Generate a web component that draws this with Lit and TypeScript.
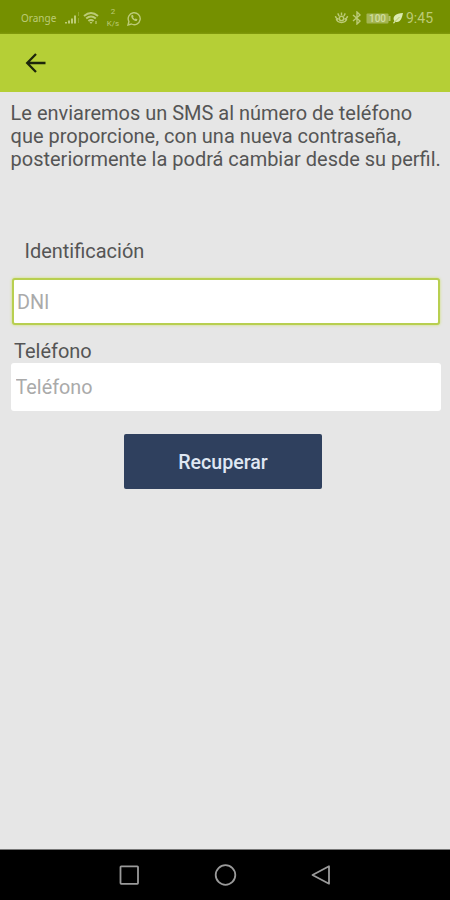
import { LitElement, html, css } from "lit";
import { customElement } from "lit/decorators.js";

@customElement("status-bar")
class StatusBar extends LitElement {
  static styles = css`
    :host { display: flex; height: 34px; background: linear-gradient(#759000 0 32px, #829b0d 34px); color: #bccb76; font: 11px Roboto, sans-serif; box-sizing: border-box; padding: 2px 17px 0 21px; align-items: center; justify-content: space-between; }
    .group { display: flex; align-items: center; }
    .carrier { font: 10px "Noto Sans", sans-serif; width: 44px; white-space: nowrap; }
    .rate { display: flex; flex-direction: column; align-items: center; font-size: 8px; line-height: 12px; width: 16px; margin: 0 6px 0 5px; }
    .time { font-size: 14px; margin-left: 2px; white-space: nowrap; }
    svg { display: block; }
  `;
  render() {
    return html`
      <div class="group">
        <span class="carrier">Orange</span>
        <svg width="18" height="16" viewBox="0 0 18 16" fill="currentColor"><path d="M0 12h2v1.5H0zM3 10.5h2v3H3zM6 8.5h2v5H6zM9 5.5h2v8H9z"/><path d="M13 2h1v4h-1zM13 8h1v5h-1z" opacity=".4"/></svg>
        <svg width="17" height="14" viewBox="0 0 17 14" fill="none" stroke="currentColor" stroke-width="2"><path d="M1 5Q8-1 15 5M3.2 7.5Q8 3.5 12.8 7.5M5.4 10Q8 8 10.6 10"/><path d="M6.5 11h3L8 13z" fill="currentColor" stroke="none"/><path d="M13 10v3" stroke-width="1.2"/></svg>
        <span class="rate"><span>2</span><span>K/s</span></span>
        <svg width="14" height="15" viewBox="0 0 14 15" fill="none" stroke="currentColor" stroke-width="1.4"><path d="M1 14l.9-3.5A6 6 0 1 1 4.4 13z"/><path d="M4.2 4.5c-.2 3 2.3 5.6 5.5 5.5l.8-1.7-1.9-.8-.9.8L6 6.2l.6-.8-.8-1.6z" fill="currentColor" stroke="none"/></svg>
      </div>
      <div class="group">
        <svg width="15" height="14" viewBox="0 0 16 14" fill="none" stroke="currentColor" stroke-width="1.5"><path d="M1.5 5c.5 2 1.5 3 3.5 3m9.5-3c-.5 2-1.5 3-3.5 3M2.5 8c1 5 10 5 11 0M8 1v3M4 2l1.5 3M12 2l-1.5 3"/><circle cx="8" cy="7.5" r="2.3"/></svg>
        <svg width="17" height="14" viewBox="0 0 17 14" fill="none" stroke="currentColor" stroke-width="1.4"><path d="M4 4l7 6-3 3V1l3 3-7 6"/></svg>
        <svg width="26" height="13" viewBox="0 0 26 13"><rect x="0.5" y="1.5" width="22" height="10" rx="1" fill="#a4b552"/><path d="M22.5 4h2v5h-2z" fill="#b2c16a"/><text x="3" y="10" font-size="10" font-weight="500" textLength="17" fill="#d2dea0">100</text></svg>
        <svg width="12" height="12" viewBox="0 0 11 12" fill="#dcebb0"><path d="M10.5 1C3 1-.5 5 1.8 9L.5 11l1 .5L3 9.8C8 11 9.5 6 10.5 1z"/><path d="M2 10l5-5" stroke="#a5b852" stroke-width=".7"/></svg>
        <span class="time">9:45</span>
      </div>`;
  }
}

@customElement("nav-bar")
class NavBar extends LitElement {
  static styles = css`
    :host { display: flex; height: 51px; box-sizing: border-box; border-top: 1px solid #777; background: #000; align-items: center; justify-content: space-between; padding: 0 118px; }
    svg { display: block; }
  `;
  render() {
    return html`
      <svg width="22" height="24" viewBox="0 0 22 24" fill="none" stroke="#9a9a9a" stroke-width="1.8"><rect x="2.5" y="3.3" width="17.5" height="17.5" rx=".7"/></svg>
      <svg width="24" height="24" viewBox="0 0 24 24" fill="none" stroke="#9a9a9a" stroke-width="1.8"><circle cx="12.5" cy="12" r="9.8"/></svg>
      <svg width="22" height="24" viewBox="0 0 22 24" fill="none" stroke="#9a9a9a" stroke-width="1.8" stroke-linejoin="round"><path d="M2.5 12L19 3.3v17.4z"/></svg>`;
  }
}

@customElement("app-root")
class AppRoot extends LitElement {
  static styles = css`
    :host { display: flex; flex-direction: column; height: 900px; background: #e6e6e6; font-family: Roboto, sans-serif; color: #555; overflow: hidden; }
    .toolbar { height: 58px; flex: none; background: #b5cf36; display: flex; align-items: center; padding-left: 25px; box-sizing: border-box; }
    main { flex: 1; display: flex; flex-direction: column; padding: 10px 10px 0; font-size: 19.98px; line-height: 23px; }
    p { margin: 0 0 0 .6px; height: 69px; white-space: nowrap; }
    .line { display: block; }
    .id { margin: 69px 0 0 14.5px; }
    .tel { margin: 15px 0 0 4px; }
    input { display: block; box-sizing: border-box; width: 430px; height: 48px; border: 0; border-radius: 3px; background: #fff; font: 19.8px Roboto, sans-serif; padding: 0 5px; margin-left: .5px; outline: none; }
    input::placeholder { color: #aaa; opacity: 1; }
    .active { width: 428px; margin: 15px 0 0 2px; height: 47px; border: 2px solid #b8cf50; padding: 1px 3px 0; box-shadow: 0 0 3px #cfe06e; }
    button { width: 198px; height: 55px; margin: 23px 0 0 114px; border: 0; border-radius: 2px; background: #2f405e; color: #dfe7f2; font: 500 19.6px Roboto, sans-serif; padding: 2px 0 0; }
  `;
  render() {
    return html`
      <status-bar></status-bar>
      <div class="toolbar">
        <svg width="22" height="22" viewBox="0 0 22 22" fill="none" stroke="#1d260b" stroke-width="2.3"><path d="M20.5 11H3M11 2L2.2 11 11 20"/></svg>
      </div>
      <main>
        <p>
          <span class="line">Le enviaremos un SMS al número de teléfono</span>
          <span class="line">que proporcione, con una nueva contraseña,</span>
          <span class="line">posteriormente la podrá cambiar desde su perfil.</span>
        </p>
        <label class="id" for="dni">Identificación</label>
        <input class="active" id="dni" placeholder="DNI" />
        <label class="tel" for="phone">Teléfono</label>
        <input id="phone" placeholder="Teléfono" />
        <button>Recuperar</button>
      </main>
      <nav-bar></nav-bar>`;
  }
}
